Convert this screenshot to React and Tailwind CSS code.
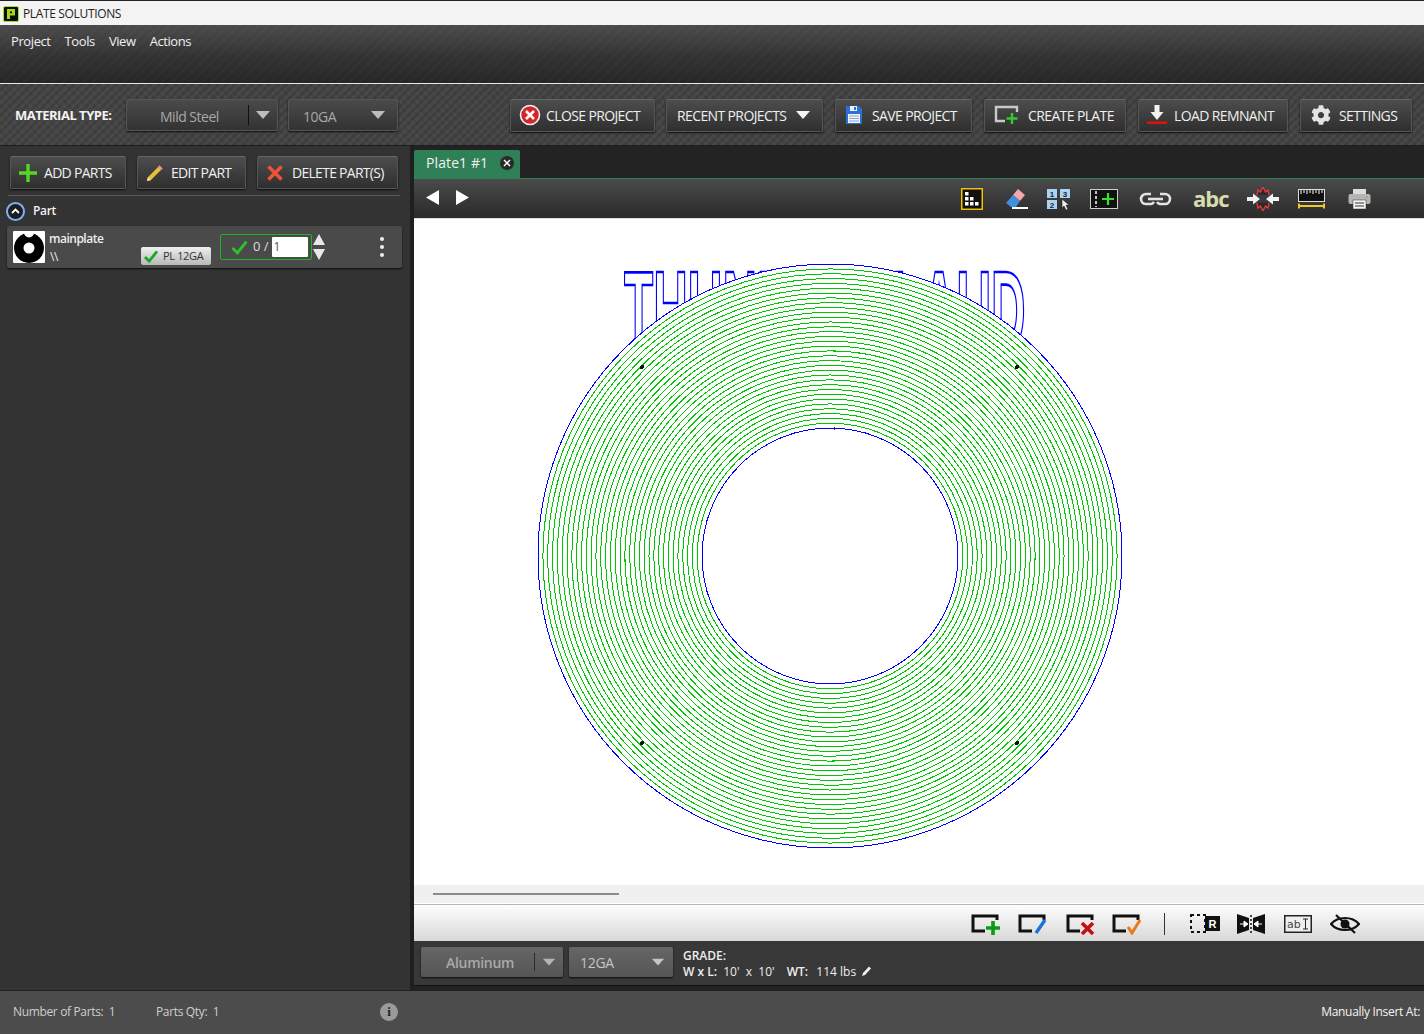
import React from "react";
import { FaCog } from "react-icons/fa";

const Logo = () => (
  <svg width="16" height="16" viewBox="0 0 16 16" className="ml-[2px] mr-[4px] mt-[1px]">
    <rect x="0.500" y="0.500" width="15" height="15" rx="1.500" fill="#0b0f04" stroke="#a8dc2a" />
    <path d="M4 3h8v6.500H7V13H4zM7 5.500v1.700h2V5.500z" fill="#a6d61e" fillRule="evenodd" />
  </svg>
);

const Tri = ({ className = "", color = "#cfcfcf" }) => (
  <svg width="14" height="8" viewBox="0 0 14 8" className={className}>
    <path d="M0 0h14L7 8z" fill={color} />
  </svg>
);

const CloseIc = () => (
  <svg width="22" height="22" viewBox="0 0 22 22">
    <circle cx="11" cy="11" r="9.500" fill="#d3252b" stroke="#f3f3f3" strokeWidth="1.600" />
    <path d="M7 7l8 8M15 7l-8 8" stroke="#fff" strokeWidth="2.600" />
  </svg>
);
const SaveIc = () => (
  <svg width="18" height="20" viewBox="0 0 18 20">
    <path d="M1 1h13l3 3v15H1z" fill="#2d6fd4" />
    <rect x="5" y="1" width="7" height="5" fill="#e8f0fb" />
    <rect x="9" y="2" width="2" height="3" fill="#2d6fd4" />
    <rect x="3" y="9" width="12" height="9" fill="#f4f4f4" />
    <path d="M4 11h10M4 13.500h10M4 16h10" stroke="#7ea6e0" />
  </svg>
);
const CreateIc = () => (
  <svg width="26" height="20" viewBox="0 0 26 20">
    <path d="M23 7V2H2v14h9" fill="none" stroke="#c9c9c9" strokeWidth="2.400" />
    <path d="M18 8v11M12.500 13.500h11" stroke="#35c92f" strokeWidth="2.400" />
  </svg>
);
const LoadIc = () => (
  <svg width="20" height="20" viewBox="0 0 20 20">
    <path d="M7.500 0h5v7h4l-6.500 8L3.500 7h4z" fill="#f1f1f1" />
    <rect x="0" y="16.500" width="20" height="2.500" fill="#e30f0f" />
  </svg>
);
const PlusIc = () => (
  <svg width="18" height="18" viewBox="0 0 18 18">
    <path d="M9 0v18M0 9h18" stroke="#54d622" strokeWidth="3.400" />
  </svg>
);
const PencilIc = () => (
  <svg width="18" height="18" viewBox="0 0 18 18">
    <path d="M13.500 1.500l3 3L5 16 1 17l1-4z" fill="#e8bd3c" stroke="#8a6d1c" strokeWidth="0.600" />
    <path d="M13.500 1.500l3 3-1.800 1.800-3-3z" fill="#e88f9c" />
    <path d="M1 17l1-4 3 3z" fill="#efe0b8" />
  </svg>
);
const XIc = () => (
  <svg width="16" height="16" viewBox="0 0 16 16">
    <path d="M1.500 1.500l13 13M14.500 1.500l-13 13" stroke="#ee5238" strokeWidth="3.600" />
  </svg>
);
const CheckIc = ({ w = 16, h = 14 }) => (
  <svg width={w} height={h} viewBox="0 0 16 14">
    <path d="M1.500 7.500l4.500 4.500L14.500 1.500" fill="none" stroke="#19a821" strokeWidth="3" />
  </svg>
);

const Btn = ({ w, children, className = "" }) => (
  <div
    className={`flex items-center h-[33px] rounded-[2px] border border-[#555] border-t-[#666] bg-gradient-to-b from-[#4d4d4d] to-[#2f2f2f] shadow-[0_1px_2px_rgba(0,0,0,0.8)] text-[#f0f0f0] text-[14px] whitespace-nowrap ${w} ${className}`}
  >
    {children}
  </div>
);

const Select = ({ w, label, pl, sep, labelClass = "" }) => (
  <div
    className={`flex items-center h-[32px] rounded-[2px] border border-[#555] bg-gradient-to-b from-[#4a4a4a] to-[#333] shadow-[0_1px_2px_rgba(0,0,0,0.8)] text-[#a8a8a8] text-[14px] tracking-[-0.5px] ${w} ${pl}`}
  >
    <span className={`flex-1 ${labelClass}`}>{label}</span>
    {sep && <span className="w-px h-[20px] bg-[#111] mr-[7px]" />}
    <Tri color="#bdbdbd" className={sep ? "mr-[7px]" : "mr-[12px]"} />
  </div>
);

const TopIcons = () => (
  <div className="flex items-center justify-end pr-[53px] h-[40px] border-t border-[#2e8156] bg-gradient-to-b from-[#4b4b4b] to-[#2a2a2a]">
    <div className="flex items-center mr-auto pl-[12px] pb-[3px] gap-[17px]">
      <svg width="13" height="15" viewBox="0 0 13 15"><path d="M13 0v15L0 7.500z" fill="#fff" /></svg>
      <svg width="13" height="15" viewBox="0 0 13 15"><path d="M0 0v15l13-7.500z" fill="#fff" /></svg>
    </div>
    <svg width="22" height="22" viewBox="0 0 22 22">
      <rect x="0.750" y="0.750" width="20.500" height="20.500" fill="#111" stroke="#f2c200" strokeWidth="1.500" />
      <path d="M4 4h3.500v3.500H4zM4 9h3.500v3.500H4zM9 9h3.500v3.500H9zM4 14h3.500v3.500H4zM9 14h3.500v3.500H9zM14 14h3.500v3.500H14z" fill="#fff" />
    </svg>
    <svg width="24" height="22" viewBox="0 0 24 22" className="ml-[21px]">
      <path d="M14 1l7 6-5 6-7-6z" fill="#f3a9a9" />
      <path d="M9 7l7 6-4 6H7l-5-4z" fill="#3f8fdc" />
      <path d="M8 20h16" stroke="#fff" strokeWidth="2" />
    </svg>
    <svg width="23" height="22" viewBox="0 0 23 22" className="ml-[19px]">
      <rect x="0" y="1" width="10" height="9" fill="#a8d4f5" />
      <rect x="13" y="1" width="10" height="9" fill="#a8d4f5" />
      <rect x="0" y="12" width="10" height="9" fill="#a8d4f5" />
      <text x="5" y="8.500" fontSize="8" fontWeight="700" textAnchor="middle" fontFamily="Liberation Sans" fill="#222">1</text>
      <text x="18" y="8.500" fontSize="8" fontWeight="700" textAnchor="middle" fontFamily="Liberation Sans" fill="#222">3</text>
      <text x="5" y="19.500" fontSize="8" fontWeight="700" textAnchor="middle" fontFamily="Liberation Sans" fill="#222">2</text>
      <path d="M15 11l7 6-3 .3 2 4-2 .7-2-4-2 2z" fill="#eee" stroke="#111" strokeWidth="0.500" />
    </svg>
    <svg width="28" height="20" viewBox="0 0 28 20" className="ml-[20px]">
      <rect x="0.500" y="0.500" width="27" height="19" fill="#111" stroke="#ccc" />
      <path d="M6 2v16" stroke="#fff" strokeWidth="1.500" strokeDasharray="3 2" />
      <path d="M18 4v12M12 10h12" stroke="#39e02f" strokeWidth="2.200" />
    </svg>
    <svg width="33" height="14" viewBox="0 0 33 14" className="ml-[21px]">
      <path d="M12 2H7a5 5 0 000 10h5a5 5 0 003-2M21 2h5a5 5 0 010 10h-5a5 5 0 01-3-2" fill="none" stroke="#e2e2e2" strokeWidth="2.600" />
      <path d="M9 7h15" stroke="#e2e2e2" strokeWidth="2.600" />
    </svg>
    <span className="ml-[21px] w-[35px] pb-[2px] text-center text-[22px] leading-none font-bold text-[#d9dcae] tracking-[-1px]">abc</span>
    <svg width="32" height="24" viewBox="0 0 32 24" className="ml-[19px]">
      <path d="M10 8l1-5 2.500 2L16 0l2.500 5L21 3l1 5M10 16l1 5 2.500-2 2.500 5 2.500-5 2.500 2 1-5" fill="#2a2a2a" stroke="#e8373c" strokeWidth="1.400" />
      <path d="M0 10h6V6.500l7 5.500-7 5.500V14H0zM32 10h-6V6.500L19 12l7 5.500V14h6z" fill="#f2f2f2" />
    </svg>
    <svg width="27" height="20" viewBox="0 0 27 20" className="ml-[19px]">
      <rect x="0.500" y="0.500" width="26" height="12" fill="#111" stroke="#ddd" />
      <path d="M3 1v4M6 1v3M9 1v4M12 1v3M15 1v4M18 1v3M21 1v4M24 1v3" stroke="#fff" />
      <path d="M1 14.500v5M26 14.500v5M1 17h25" stroke="#f0c81e" strokeWidth="2" />
    </svg>
    <svg width="23" height="22" viewBox="0 0 23 22" className="ml-[23px]">
      <rect x="5" y="1" width="13" height="6" fill="#ddd" />
      <rect x="0.500" y="6" width="22" height="10" rx="2" fill="#b5b5b5" />
      <circle cx="19" cy="9" r="1" fill="#59d62b" />
      <rect x="5" y="12" width="13" height="9" fill="#f4f4f4" stroke="#333" strokeWidth="0.500" />
      <path d="M7 15h9M7 18h9" stroke="#333" />
    </svg>
  </div>
);

const Bracket = ({ children, ...p }) => (
  <svg width="30" height="21" viewBox="0 0 30 21" {...p}>
    <path d="M26 6V2H2v15h12" fill="none" stroke="#111" strokeWidth="3" />
    {children}
  </svg>
);

const BottomIcons = () => (
  <div className="flex items-center h-[36px] pt-[2px] pl-[557px] bg-gradient-to-b from-[#fdfdfd] to-[#d8d8d8]">
    <Bracket><path d="M22 7v14M15 14h14" stroke="#0a9a16" strokeWidth="3.600" /></Bracket>
    <Bracket className="ml-[17px]"><path d="M18 19l9-13" stroke="#1b74d8" strokeWidth="3.400" /></Bracket>
    <Bracket className="ml-[18px]"><path d="M16 9l11 11M27 9L16 20" stroke="#c11212" strokeWidth="3.600" /></Bracket>
    <Bracket className="ml-[16px]"><path d="M16 13l4 6 8-13" fill="none" stroke="#ea7a1a" strokeWidth="3" /></Bracket>
    <span className="ml-[22px] w-px h-[22px] bg-[#333]" />
    <svg width="30" height="20" viewBox="0 0 30 20" className="ml-[25px]">
      <rect x="1" y="1" width="14" height="17" fill="none" stroke="#111" strokeWidth="2" strokeDasharray="3 3" />
      <rect x="15" y="2" width="15" height="15" fill="#111" />
      <text x="22.500" y="14" textAnchor="middle" fontSize="11" fontWeight="700" fontFamily="Liberation Sans" fill="#fff">R</text>
    </svg>
    <svg width="28" height="20" viewBox="0 0 28 20" className="ml-[17px]">
      <path d="M0 0l12 4v12L0 20zM28 0L16 4v12l12 4z" fill="#111" />
      <path d="M14 1v18" stroke="#111" strokeWidth="1.500" strokeDasharray="2 2" />
      <path d="M3 10h4V7l4 3-4 3v-3M25 10h-4V7l-4 3 4 3v-3" fill="#fff" stroke="#fff" />
    </svg>
    <svg width="28" height="18" viewBox="0 0 28 18" className="ml-[19px]">
      <rect x="0.750" y="0.750" width="26.500" height="16.500" fill="#eee" stroke="#222" strokeWidth="1.500" />
      <text x="3" y="13" fontSize="11" fontFamily="DejaVu Sans" fill="#444">ab</text>
      <path d="M19 4h5M19 14h5M21.500 4v10" stroke="#222" />
    </svg>
    <svg width="30" height="20" viewBox="0 0 30 20" className="ml-[18px]">
      <path d="M1 10c7-8 21-8 28 0-7 8-21 8-28 0z" fill="none" stroke="#111" strokeWidth="2.200" />
      <circle cx="15" cy="10" r="4.500" fill="#111" />
      <path d="M6 1l19 18" stroke="#111" strokeWidth="2.200" />
    </svg>
  </div>
);

const rings = Array.from({ length: 33 }, (_, i) => 128 + (i + 1) * 4.82);

const Drawing = () => (
  <svg viewBox="414 219 1010 666" width="1010" height="666" className="block" shapeRendering="crispEdges">
    <text
      transform="translate(624 350) scale(0.42 1)"
      fontSize="114"
      fontWeight="700"
      fontFamily="Liberation Sans"
      fill="#fff"
      stroke="#0000ff"
      strokeWidth="2.600"
    >
      THUNDERCLAUD
    </text>
    <circle cx="830" cy="556" r="292" fill="#fff" stroke="#0000ff" strokeWidth="1" />
    {rings.map((r) => (
      <circle key={r} cx="830" cy="556" r={r} fill="none" stroke="#00c800" strokeWidth="1" />
    ))}
    <circle cx="830" cy="556" r="128" fill="#fff" stroke="#0000ff" strokeWidth="1" />
    <path d="M834 427v3" stroke="#222" />
    {[[642, 367], [1017, 367], [642, 743], [1017, 743]].map(([x, y]) => (
      <circle key={x + "-" + y} cx={x} cy={y} r="2" fill="#111" />
    ))}
  </svg>
);

export default function App() {
  return (
    <div className="w-[1424px] h-[1034px] flex flex-col overflow-hidden bg-[#333] font-['Open_Sans',sans-serif]">
      {/* title bar */}
      <div className="flex items-center h-[25px] pl-[1px] bg-[#f3f3f3] border-t border-[#222] text-[12px] text-[#222] tracking-[-0.35px]">
        <Logo />
        <span className="pt-[1px]">PLATE SOLUTIONS</span>
      </div>

      {/* menu */}
      <div className="h-[59px] flex items-start gap-[14px] pl-[11px] pt-[7px] border-b border-[#e8e8e8] text-[13px] tracking-[-0.4px] text-[#f0f0f0] [background:repeating-linear-gradient(135deg,rgba(255,255,255,0.02)_0_2px,transparent_2px_7px),linear-gradient(#4c4c4c,#343434_50%,#262626)]">
        <span>Project</span>
        <span>Tools</span>
        <span>View</span>
        <span className="tracking-[-0.45px]">Actions</span>
      </div>

      {/* toolbar */}
      <div className="h-[62px] flex items-center pt-[1px] border-b border-[#1d1d1d] tracking-[-0.62px] [background:repeating-linear-gradient(45deg,rgba(255,255,255,0.02)_0_3px,transparent_3px_6px),repeating-linear-gradient(-45deg,#3d3d3d_0_3px,#454545_3px_6px)]">
        <span className="ml-[15px] w-[111px] pt-[2px] text-[13px] font-bold tracking-[-0.5px] text-[#f2f2f2]">MATERIAL TYPE:</span>
        <Select w="w-[152px]" pl="pl-[33px]" label="Mild Steel" labelClass="pt-[2px]" sep />
        <Select w="w-[110px] ml-[10px]" pl="pl-[14px]" label="10GA" labelClass="pt-[3px]" />
        <Btn w="w-[145px] ml-[112px]"><span className="ml-[8px] mr-[5px] flex"><CloseIc /></span><span className="pt-[1px]">CLOSE PROJECT</span></Btn>
        <Btn w="w-[157px] ml-[11px]"><span className="ml-[10px] mr-[10px] pt-[1px]">RECENT PROJECTS</span><Tri color="#f4f4f4" /></Btn>
        <Btn w="w-[137px] ml-[12px]"><span className="ml-[9px] mr-[9px] flex"><SaveIc /></span><span className="pt-[1px]">SAVE PROJECT</span></Btn>
        <Btn w="w-[142px] ml-[12px]"><span className="ml-[9px] mr-[8px] flex"><CreateIc /></span><span className="pt-[1px]">CREATE PLATE</span></Btn>
        <Btn w="w-[150px] ml-[12px]"><span className="ml-[8px] mr-[7px] flex"><LoadIc /></span><span className="pt-[1px]">LOAD REMNANT</span></Btn>
        <Btn w="w-[112px] ml-[12px]"><span className="ml-[10px] mr-[8px] flex"><FaCog size={20} color="#e4e4e4" /></span><span className="pt-[1px]">SETTINGS</span></Btn>
      </div>

      {/* middle */}
      <div className="flex-1 flex min-h-0">
        <div className="w-[410px] bg-[#333] flex flex-col shrink-0">
          <div className="flex pt-[10px] pl-[10px] gap-[11px] h-[49px] tracking-[-0.72px]">
            <Btn w="w-[116px]"><span className="ml-[8px] mr-[7px] flex"><PlusIc /></span>ADD PARTS</Btn>
            <Btn w="w-[109px]"><span className="ml-[8px] mr-[7px] flex"><PencilIc /></span>EDIT PART</Btn>
            <Btn w="w-[141px]"><span className="ml-[9px] mr-[9px] flex"><XIc /></span>DELETE PART(S)</Btn>
          </div>
          <div className="mx-[8px] w-[392px] h-px bg-[#5c5c5c]" />
          <div className="flex items-center h-[30px] pl-[6px] gap-[8px] text-[12px] font-semibold text-[#f0f0f0] tracking-[-0.3px]">
            <span className="flex items-center justify-center w-[19px] h-[19px] rounded-full bg-[#1d1d1d] border-2 border-[#7fb0f5]">
              <svg width="9" height="6" viewBox="0 0 9 6"><path d="M1 5l3.500-3.500L8 5" fill="none" stroke="#fff" strokeWidth="1.800" /></svg>
            </span>
            Part
          </div>
          <div className="ml-[7px] w-[395px] h-[42px] flex items-center rounded-[2px] bg-[#4a4a4a] shadow-[0_1px_2px_rgba(0,0,0,0.8)]">
            <svg width="32" height="32" viewBox="0 0 32 32" className="ml-[6px] shrink-0">
              <rect width="32" height="32" rx="1" fill="#fff" />
              <circle cx="16" cy="17" r="15" fill="#000" />
              <path d="M11 0h10v1.500a5 5 0 01-10 0z" fill="#fff" />
              <circle cx="16" cy="17" r="5.500" fill="#fff" />
            </svg>
            <div className="ml-[4px] w-[92px] h-full flex flex-col pt-[4px] text-[12px] leading-[18px] text-[#eee] tracking-[-0.5px]">
              <span className="font-semibold">mainplate</span>
              <span className="pl-[1px]">\\</span>
            </div>
            <div className="self-end mb-[3px] flex items-center pl-[2px] gap-[4px] w-[70px] h-[18px] rounded-[2px] bg-gradient-to-b from-[#f0f0f0] to-[#b8b8b8] text-[11px] tracking-[-0.35px] text-[#333]">
              <CheckIc w={16} h={13} />
              <span className="pt-[1px]">PL 12GA</span>
            </div>
            <div className="ml-[9px] flex items-center w-[92px] h-[26px] rounded-[2px] border border-[#1fb51f] text-[13px] text-[#ddd]">
              <span className="ml-[10px] mr-[5px] flex"><svg width="17" height="15" viewBox="0 0 16 14"><path d="M1.500 7.500l4.500 4.500L14.500 1.500" fill="none" stroke="#29c42b" strokeWidth="2.800" /></svg></span>
              <span className="whitespace-nowrap tracking-[0px]">0 /</span>
              <span className="ml-[3px] w-[36px] h-[20px] pl-[2px] rounded-[1px] bg-white text-[12px] leading-[20px] text-[#555]">1</span>
            </div>
            <div className="ml-[1px] flex flex-col gap-[4px]">
              <svg width="12" height="11" viewBox="0 0 12 11"><path d="M6 0l6 11H0z" fill="#e8e8e8" /></svg>
              <svg width="12" height="11" viewBox="0 0 12 11"><path d="M0 0h12L6 11z" fill="#e8e8e8" /></svg>
            </div>
            <div className="ml-[55px] flex flex-col gap-[4px]">
              <span className="w-[4px] h-[4px] rounded-full bg-[#eee]" />
              <span className="w-[4px] h-[4px] rounded-full bg-[#eee]" />
              <span className="w-[4px] h-[4px] rounded-full bg-[#eee]" />
            </div>
          </div>
        </div>

        <div className="w-[4px] shrink-0 bg-[#1f1f1f]" />

        <div className="flex-1 flex flex-col min-w-0 bg-[#222]">
          <div className="h-[32px] flex items-end bg-[#232323]">
            <div className="w-[106px] h-[28px] flex items-center pl-[12px] pb-[3px] rounded-t-[2px] bg-[#2f7f57] text-[14px] text-[#f2f2f2] tracking-[0.1px]">
              <span className="flex-1">Plate1 #1</span>
              <span className="mr-[6px] flex items-center justify-center w-[14px] h-[14px] rounded-full bg-[#2a2a2a]">
                <svg width="8" height="8" viewBox="0 0 8 8"><path d="M1 1l6 6M7 1L1 7" stroke="#fff" strokeWidth="1.500" /></svg>
              </span>
            </div>
          </div>
          <TopIcons />
          <div className="h-px bg-[#ddd]" />
          <div className="h-[666px] bg-white overflow-hidden">
            <Drawing />
          </div>
          <div className="h-[18px] bg-[#f0f0f0] flex items-center pl-[19px]">
            <div className="w-[186px] h-[2px] bg-[#8c8c8c]" />
          </div>
          <div className="h-[1px] bg-white" />
          <div className="h-[1px] bg-[#b5b5b5]" />
          <BottomIcons />
          <div className="h-[44px] flex items-center pl-[7px] bg-[#383838]">
            <div className="flex items-center mb-[2px] w-[142px] h-[30px] rounded-[2px] bg-gradient-to-b from-[#666] to-[#555] shadow-[0_1px_2px_rgba(0,0,0,0.8)] text-[14px] font-semibold text-[#a9a9a9] tracking-[-0.3px]">
              <span className="flex-1 pl-[25px] pt-[1px]">Aluminum</span>
              <span className="w-px h-[18px] bg-[#2a2a2a] mr-[7px]" />
              <Tri color="#b5b5b5" className="mr-[7px] scale-90" />
            </div>
            <div className="ml-[6px] mb-[2px] flex items-center w-[104px] h-[30px] rounded-[2px] bg-gradient-to-b from-[#666] to-[#555] shadow-[0_1px_2px_rgba(0,0,0,0.8)] text-[14px] text-[#c4c4c4] tracking-[-0.3px]">
              <span className="flex-1 pl-[11px]">12GA</span>
              <Tri color="#c4c4c4" className="mr-[8px] scale-90" />
            </div>
            <div className="ml-[10px] pt-[1px] flex flex-col text-[12px] leading-[16px] text-[#eee]">
              <span className="font-semibold">GRADE:</span>
              <span className="flex items-center whitespace-pre">
                <span className="font-semibold">W x L:</span>  10'  x  10'<span className="font-semibold ml-[12px]">WT:</span><span className="ml-[2px]">  114 lbs</span>
                <svg width="12" height="12" viewBox="0 0 12 12" className="ml-[5px] mb-[2px]"><path d="M1 11l1-3 6-6.500 2 2L4 10z" fill="#eee" /></svg>
              </span>
            </div>
          </div>
          <div className="h-[5px] bg-[#222] border-t border-[#111]" />
        </div>
      </div>

      {/* footer */}
      <div className="h-[44px] shrink-0 flex items-center pb-[2px] border-t border-[#222] bg-[#4c4c4c] text-[12px] tracking-[-0.35px] text-[#cfcfcf]">
        <span className="ml-[13px] w-[143px]">Number of Parts:&nbsp; 1</span>
        <span className="w-[224px]">Parts Qty:&nbsp; 1</span>
        <span className="flex items-center justify-center w-[18px] h-[18px] rounded-full bg-[#9a9a9a] text-[#222] font-bold text-[13px] font-['Liberation_Serif',serif]">i</span>
        <span className="ml-auto mr-[4px] tracking-[-0.3px] text-[#f4f4f4]">Manually Insert At:</span>
      </div>
    </div>
  );
}
